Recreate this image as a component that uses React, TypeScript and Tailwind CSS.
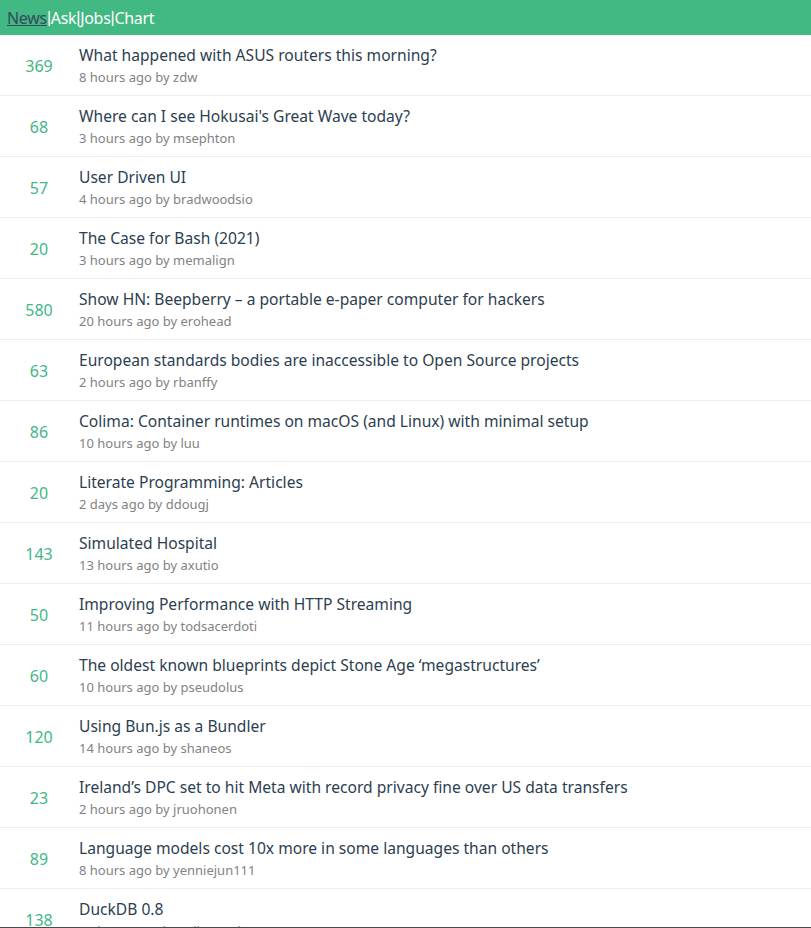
const items: [number, string, string, string][] = [
  [369, "What happened with ASUS routers this morning?", "8 hours ago", "zdw"],
  [68, "Where can I see Hokusai's Great Wave today?", "3 hours ago", "msephton"],
  [57, "User Driven UI", "4 hours ago", "bradwoodsio"],
  [20, "The Case for Bash (2021)", "3 hours ago", "memalign"],
  [580, "Show HN: Beepberry – a portable e-paper computer for hackers", "20 hours ago", "erohead"],
  [63, "European standards bodies are inaccessible to Open Source projects", "2 hours ago", "rbanffy"],
  [86, "Colima: Container runtimes on macOS (and Linux) with minimal setup", "10 hours ago", "luu"],
  [20, "Literate Programming: Articles", "2 days ago", "ddougj"],
  [143, "Simulated Hospital", "13 hours ago", "axutio"],
  [50, "Improving Performance with HTTP Streaming", "11 hours ago", "todsacerdoti"],
  [60, "The oldest known blueprints depict Stone Age ‘megastructures’", "10 hours ago", "pseudolus"],
  [120, "Using Bun.js as a Bundler", "14 hours ago", "shaneos"],
  [23, "Ireland’s DPC set to hit Meta with record privacy fine over US data transfers", "2 hours ago", "jruohonen"],
  [89, "Language models cost 10x more in some languages than others", "8 hours ago", "yenniejun111"],
  [138, "DuckDB 0.8", "10 hours ago", "ndhamecha"],
];

const Sep = () => <span className="font-['Liberation_Sans',sans-serif]">|</span>;

export default function App() {
  return (
    <div className="min-h-screen bg-white" style={{ fontFamily: '"Noto Sans", "Open Sans", sans-serif' }}>
      {/* top nav */}
      <nav className="h-[35px] bg-[#42b883] flex items-center px-[7px] text-[16px] tracking-[-0.3px] text-white">
        <a className="text-[#35495e] underline">News</a>
        <Sep />
        <a>Ask</a>
        <Sep />
        <a>Jobs</a>
        <Sep />
        <a>Chart</a>
      </nav>
      <ul>
        {items.map(([score, title, time, user], i) => (
          <li key={i} className="flex items-center h-[61px] border-b border-[#eeeeee]">
            <div className="w-[78px] shrink-0 text-center text-[16px] text-[#42b883] pt-[2px]">{score}</div>
            <div className="flex flex-col pl-[1px]">
              <span className="text-[15.6px] leading-[22px] text-[#2c3e50]">{title}</span>
              <span className="text-[13px] leading-[20px] pt-[1px] text-[#828282]">
                {time} by {user}
              </span>
            </div>
          </li>
        ))}
      </ul>
      <div className="fixed bottom-0 left-0 right-0 h-[1px] bg-[#4a4a4a]" />
    </div>
  );
}
